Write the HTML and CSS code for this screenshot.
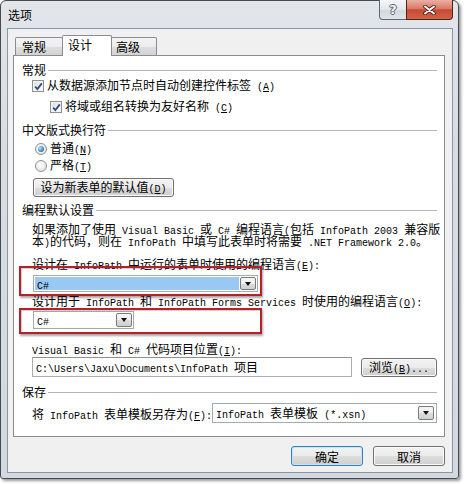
FILE: index.html
```html
<!DOCTYPE html>
<html lang="zh-CN">
<head>
<meta charset="utf-8">
<title>选项</title>
<link rel="stylesheet" href="styles.css">
</head>
<body>
<div class="window">
  <div class="titlebar">
    <span class="title">选项</span>
    <div class="caption">
      <div class="cap help"><span class="q">?</span></div>
      <div class="cap close">
        <svg width="13" height="10" viewBox="0 0 13 10"><path d="M2 1.5 L11 8.5 M11 1.5 L2 8.5" stroke="#4a1d14" stroke-width="3.6" stroke-linecap="round" fill="none"/><path d="M2 1.5 L11 8.5 M11 1.5 L2 8.5" stroke="#fff" stroke-width="2" stroke-linecap="round" fill="none"/></svg>
      </div>
    </div>
  </div>
  <div class="client">
    <div class="tabs">
      <div class="tab t1">常规</div>
      <div class="tab sel">设计</div>
      <div class="tab t3">高级</div>
    </div>
    <div class="panel">
      <div class="hdr">常规</div>
      <div class="cb cb1">
        <span class="box"><svg width="9" height="9" viewBox="0 0 9 9"><path d="M1.2 4.6 L3.4 7 L7.8 1.4" stroke="#2b4b86" stroke-width="1.8" fill="none"/></svg></span>
        <span>从数据源添加节点时自动创建控件标签<span class="m"> (<u>A</u>)</span></span>
      </div>
      <div class="cb cb2">
        <span class="box"><svg width="9" height="9" viewBox="0 0 9 9"><path d="M1.2 4.6 L3.4 7 L7.8 1.4" stroke="#2b4b86" stroke-width="1.8" fill="none"/></svg></span>
        <span>将域或组名转换为友好名称<span class="m"> (<u>C</u>)</span></span>
      </div>
      <div class="hdr hdr2">中文版式换行符</div>
      <div class="rb rb1"><span class="radio on"></span><span>普通<span class="m">(<u>N</u>)</span></span></div>
      <div class="rb rb2"><span class="radio"></span><span>严格<span class="m">(<u>T</u>)</span></span></div>
      <button class="btn defbtn">设为新表单的默认值<span class="m">(<u>D</u>)</span></button>
      <div class="hdr hdr3">编程默认设置</div>
      <div class="para">
        <div class="line">如果添加了使用<span class="m"> Visual Basic </span>或<span class="m"> C# </span>编程语言<span class="m">(</span>包括<span class="m"> InfoPath 2003 </span>兼容版</div>
        <div class="line">本<span class="m">)</span>的代码，则在<span class="m"> InfoPath </span>中填写此表单时将需要<span class="m"> .NET Framework 2.0</span>。</div>
      </div>
      <div class="lbl lblE">设计在<span class="m"> InfoPath </span>中运行的表单时使用的编程语言<span class="m">(<u>E</u>):</span></div>
      <div class="combo combo1 hl"><span class="val"><span class="m">C#</span></span><span class="dd"></span></div>
      <div class="lbl lblO">设计用于<span class="m"> InfoPath </span>和<span class="m"> InfoPath Forms Services </span>时使用的编程语言<span class="m">(<u>O</u>):</span></div>
      <div class="combo combo2"><span class="val"><span class="m">C#</span></span><span class="dd"></span></div>
      <div class="lbl lblVB"><span class="m">Visual Basic </span>和<span class="m"> C# </span>代码项目位置<span class="m">(<u>I</u>):</span></div>
      <div class="inrow">
        <div class="input"><span class="m">C:\Users\Jaxu\Documents\InfoPath </span>项目</div>
        <button class="btn browse">浏览<span class="m">(<u>B</u>)...</span></button>
      </div>
      <div class="hdr hdr4">保存</div>
      <div class="saverow">
        <span>将<span class="m"> InfoPath </span>表单模板另存为<span class="m">(<u>F</u>):</span></span>
        <div class="combo combo3"><span class="val"><span class="m">InfoPath </span>表单模板<span class="m"> (*.xsn)</span></span><span class="dd"></span></div>
      </div>
      <div class="redbox r1"></div>
      <div class="redbox r2"></div>
    </div>
    <div class="buttons">
      <button class="btn okbtn">确定</button>
      <button class="btn">取消</button>
    </div>
  </div>
</div>
</body>
</html>
```
FILE: styles.css
```css
* { box-sizing: border-box; }
html, body { margin: 0; padding: 0; background: #fff; }
body {
  width: 464px; height: 484px; overflow: hidden;
  font-family: "Noto Sans CJK SC", "Noto Sans CJK JP", sans-serif;
  font-size: 12px; color: #000;
}
.m { font-family: "Liberation Mono", "DejaVu Sans Mono", monospace; font-size: 10px; }
u { text-decoration: underline; text-underline-offset: 1px; }

.window {
  width: 459px; height: 479px;
  border: 1px solid #454b53;
  border-radius: 6px 6px 3px 3px;
  background: linear-gradient(#e2e6eb, #d7dde3 30%, #d2d9e0);
  padding: 0 5px 5px 6px;
  box-shadow: 2px 2px 3px rgba(0,0,0,.4);
  display: flex; flex-direction: column;
}
.titlebar { height: 27px; display: flex; justify-content: space-between; align-items: flex-start; }
.title { margin-left: 1px; line-height: 27px; }
.caption { display: flex; margin-top: -1px; }
.cap { height: 20px; display: flex; align-items: center; justify-content: center; border: 1px solid #5e6772; border-top: none; }
.help {
  width: 27px; border-right: none; border-radius: 0 0 0 4px;
  background: linear-gradient(#f4f6f8, #e3e7eb 50%, #d2d8de 55%, #dfe4e8);
}
.q {
  font-family: "DejaVu Sans", sans-serif; font-weight: bold; font-size: 13px; line-height: 1;
  color: #f4f4f4;
  text-shadow: 1px 0 0 #5b6570, -1px 0 0 #5b6570, 0 1px 0 #5b6570, 0 -1px 0 #5b6570;
}
.close {
  width: 47px; border-color: #4f2218; border-radius: 0 0 4px 0;
  background: linear-gradient(#eab0a3, #d97a66 45%, #c74a31 52%, #d0624a);
}

.client {
  width: 446px; height: 445px;
  border: 1px solid #8a96a3;
  background: #f0f0f0;
  padding: 6px 7px 0 5px;
  display: flex; flex-direction: column;
}
.tabs { display: flex; align-items: flex-end; height: 20px; margin-left: 2px; position: relative; z-index: 1; }
.tab {
  height: 18px; border: 1px solid #898c95; border-bottom: none;
  border-radius: 2px 2px 0 0;
  background: linear-gradient(#f4f4f4, #ececec 50%, #dedede 52%, #d3d3d3);
  padding-left: 6px; line-height: 17px;
}
.t1 { width: 48px; }
.t3 { width: 46px; padding-left: 4px; }
.sel {
  width: 50px; height: 21px; margin: 0 -1px -1px -1px;
  background: #fff; position: relative; z-index: 2;
  padding-left: 5px;
}

.panel {
  position: relative;
  width: 432px; height: 382px;
  border: 1px solid #898c95; background: #fff;
  padding: 7px 7px 0 8px;
  display: flex; flex-direction: column;
}
.hdr { display: flex; align-items: center; height: 14px; line-height: 14px; white-space: nowrap; }
.hdr::after { content: ""; flex: 1; height: 1px; background: #b4b4b4; margin-left: 2px; margin-top: 1px; }
.hdr2 { margin-top: 9px; }
.hdr3 { margin-top: 6px; }
.hdr4 { margin-top: 8px; }

.cb, .rb { display: flex; align-items: center; height: 14px; line-height: 14px; gap: 3px; white-space: nowrap; }
.cb1 { margin: 2px 0 0 10px; }
.cb2 { margin: 7px 0 0 28px; }
.box {
  width: 12px; height: 12px; border: 1px solid #8e8f8f;
  background: linear-gradient(135deg, #dadada, #f7f7f7 70%, #fff);
  box-shadow: inset 0 0 0 1px #f4f4f4;
  display: flex; align-items: center; justify-content: center;
}
.rb1 { margin: 5px 0 0 13px; }
.rb2 { margin: 3px 0 0 13px; }
.radio {
  width: 12px; height: 12px; border-radius: 50%;
  border: 1px solid #8e8f8f;
  background: radial-gradient(circle at 40% 40%, #fff, #dcdcdc);
  display: flex; align-items: center; justify-content: center;
}
.radio.on::after {
  content: ""; width: 6px; height: 6px; border-radius: 50%;
  background: radial-gradient(circle at 35% 35%, #bfe3fb, #3d86c9 60%, #1d5a98);
}

.btn {
  font: inherit; color: #000; padding: 0; margin: 0;
  height: 20px; border: 1px solid #707070; border-radius: 3px;
  background: linear-gradient(#f2f2f2, #ebebeb 50%, #dddddd 52%, #cfcfcf);
  box-shadow: inset 0 0 0 1px #fbfbfb;
  line-height: 17px; white-space: nowrap;
}
.defbtn { align-self: flex-start; width: 141px; height: 19px; margin: 5px 0 0 11px; line-height: 16px; }

.para { margin: 6px 0 0 10px; }
.line { height: 12px; line-height: 12px; white-space: nowrap; }

.lbl { height: 14px; line-height: 14px; white-space: nowrap; margin-left: 10px; }
.lblE { margin-top: 10px; }
.lblO { margin-top: 2px; }
.lblVB { margin-top: 13px; }

.combo {
  display: flex; align-items: stretch;
  border: 1px solid #a4aab2; background: #fff; padding: 1px;
  white-space: nowrap;
}
.combo .val { flex: 1; display: block; padding-left: 2px; line-height: 13px; }
.combo.hl .val { background: #99c9f3; }
.dd {
  width: 16px; margin-left: 1px;
  border: 1px solid #7a7a7a; border-radius: 2px;
  background: linear-gradient(#f6f6f6, #ececec 50%, #dcdcdc 52%, #d0d0d0);
  display: flex; align-items: center; justify-content: center;
}
.dd::before {
  content: ""; border-left: 3.5px solid transparent; border-right: 3.5px solid transparent;
  border-top: 4px solid #111;
}
.combo1 { width: 225px; height: 17px; margin: 4px 0 0 11px; }
.combo2 { width: 101px; height: 18px; margin: 3px 0 0 11px; }
.combo2 .val { line-height: 14px; }

.inrow { display: flex; align-items: center; gap: 9px; height: 20px; margin: 1px 0 0 10px; }
.input {
  width: 320px; height: 20px;
  border: 1px solid #abadb3; border-top-color: #8d9096;
  background: #fff; padding-left: 3px; line-height: 18px; white-space: nowrap;
}
.browse { width: 76px; height: 19px; line-height: 16px; }

.saverow { display: flex; align-items: center; height: 20px; margin: 4px 0 0 10px; white-space: nowrap; }
.combo3 { width: 225px; height: 20px; margin-left: auto; padding: 2px; }
.combo3 .val { padding-left: 1px; line-height: 14px; }

.redbox {
  position: absolute; left: 5px; width: 243px;
  border: 2px solid #b3222b;
  box-shadow: 1px 2px 2px rgba(0,0,0,.35), inset 1px 1px 1px rgba(0,0,0,.2);
  pointer-events: none;
}
.r1 { top: 210px; height: 30px; }
.r2 { top: 252px; height: 26px; }

.buttons { display: flex; justify-content: flex-end; gap: 10px; margin-top: 9px; }
.buttons .btn { width: 72px; }
.okbtn { border-color: #3c7fb1; box-shadow: inset 0 0 0 1px #bfe6f8; }
```
